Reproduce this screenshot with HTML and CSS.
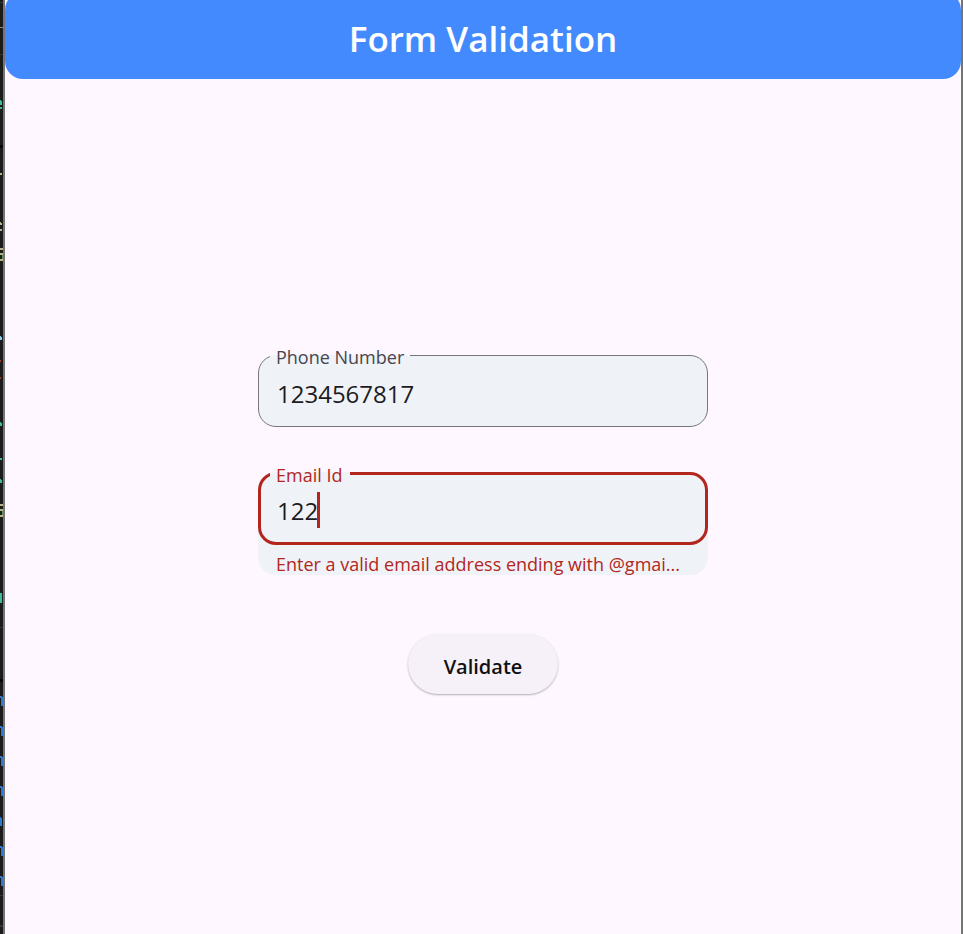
FILE: index.html
```html
<!DOCTYPE html>
<html lang="en">
<head>
<meta charset="utf-8">
<title>Form Validation</title>
<meta name="viewport" content="width=device-width, initial-scale=1">
<link rel="stylesheet" href="styles.css">
</head>
<body>
<div class="desktop">
  <svg class="backdrop" viewBox="0 0 3 934" preserveAspectRatio="xMinYMin slice" aria-hidden="true">
    <path fill="#8a8a80" d="M0 27h3v1H0z"/>
    <path fill="#35363a" d="M0 2h3v1H0zM0 54h3v1H0zM0 895h3v1H0zM0 925h3v2H0zM0 627h3v1H0z"/>
    <path fill="#060606" d="M0 145h3v3H0zM0 679h3v3H0z"/>
    <path fill="#3fb9a0" d="M0 100h1v1h1v4H0zM0 107h2v2H0zM0 422h1v1h1v3H0zM0 458h2v2H0zM0 479h1v1h1v3H0zM0 593h2v10H0z"/>
    <path fill="#b5b58a" d="M0 173h2v2H0zM0 222h1v1h1v2H0zM0 229h2v2H0zM0 248h3v2H0zM0 253h3v2H0zM0 259h3v2H0zM0 504h3v2H0zM0 509h3v2H0zM0 515h3v2H0z"/>
    <path fill="#529955" d="M2 255h1v4H2zM2 511h1v4H2z"/>
    <path fill="#8cc8e8" d="M0 336h1v1h1v3H0z"/>
    <path fill="#98402a" d="M0 360h1v2H0zM0 377h1v2H0z"/>
    <path fill="#2f78d0" d="M0 696h2v1h1v9H1v-8H0zM0 726h2v1h1v9H1v-8H0zM0 756h2v1h1v9H1v-8H0zM0 786h2v1h1v9H1v-8H0zM0 817h1v1h1v8H0zM0 846h2v1h1v9H1v-8H0zM0 876h2v1h1v9H1v-8H0z"/>
  </svg>
  <div class="window">
    <header class="app-bar"><h1 class="app-title">Form Validation</h1></header>
    <main class="content">
      <form class="form" novalidate>
        <div class="field">
          <fieldset class="outline">
            <legend class="legend"><label for="phone">Phone Number</label></legend>
            <input class="input" id="phone" type="tel" value="1234567817">
          </fieldset>
        </div>
        <div class="field field-error">
          <fieldset class="outline">
            <legend class="legend"><label for="email">Email Id</label></legend>
            <input class="input" id="email" type="text" value="122" aria-invalid="true" aria-describedby="email-error">
            <span class="caret"></span>
          </fieldset>
          <p class="message" id="email-error">Enter a valid email address ending with @gmai...</p>
        </div>
        <button class="submit" type="button">Validate</button>
      </form>
    </main>
  </div>
</div>
</body>
</html>
```
FILE: styles.css
```css
* {
  box-sizing: border-box;
}

body {
  margin: 0;
  font-family: "Open Sans", "Noto Sans", sans-serif;
  background: #1b1b1c;
}

.desktop {
  display: flex;
  min-height: 100vh;
  overflow: hidden;
}

.backdrop {
  flex: none;
  width: 3px;
  height: 100vh;
}

.window {
  flex: 1;
  min-width: 0;
  border: solid #757575;
  border-width: 0 2px;
  background: #fef7ff;
}

.app-bar {
  display: flex;
  align-items: center;
  justify-content: center;
  height: 87px;
  margin-top: -8px;
  padding-top: 6px;
  border-radius: 18px;
  background: #448aff;
}

.app-title {
  margin: 0;
  color: #fff;
  font-size: 35px;
  font-weight: 600;
  line-height: 48px;
}

.content {
  display: flex;
  justify-content: center;
  padding: 264px 16px 0;
}

.form {
  display: flex;
  flex-direction: column;
  align-items: center;
  width: 100%;
  max-width: 450px;
}

.field {
  width: 100%;
  margin-bottom: 34px;
}

.outline {
  position: relative;
  min-width: 0;
  margin: 0;
  padding: 0 18px;
  border: 1px solid #79747e;
  border-radius: 18px;
  background: #eff3f8;
}

.legend {
  margin-left: -7px;
  padding: 4px 6px 0;
  color: #49454f;
  font-size: 18px;
  line-height: 20px;
}

.input {
  display: block;
  width: 100%;
  height: 59px;
  padding: 0 0 6px;
  border: 0;
  outline: 0;
  color: #1d1b20;
  background: transparent;
  font: inherit;
  font-size: 24px;
}

.field-error {
  margin-bottom: 59px;
}

.field-error .outline {
  padding: 0 16px;
  border: 3px solid #b3261e;
}

.field-error .legend {
  padding-right: 8px;
  color: #b3261e;
}

.field-error .input {
  height: 57px;
}

.caret {
  position: absolute;
  top: 7px;
  left: 56px;
  width: 3px;
  height: 36px;
  background: #b3261e;
}

.message {
  margin: -20px 0 0;
  padding: 28px 18px 0;
  border-radius: 0 0 18px 18px;
  color: #b3261e;
  background: #eff3f8;
  font-size: 18px;
  line-height: 22px;
}

.submit {
  height: 60px;
  padding: 4px 36px 0;
  border: 0;
  border-radius: 30px;
  color: #111;
  background: #f6f1f9;
  box-shadow: 0 1px 2px rgba(0, 0, 0, 0.3);
  font: inherit;
  font-size: 20px;
  font-weight: 600;
}
```
